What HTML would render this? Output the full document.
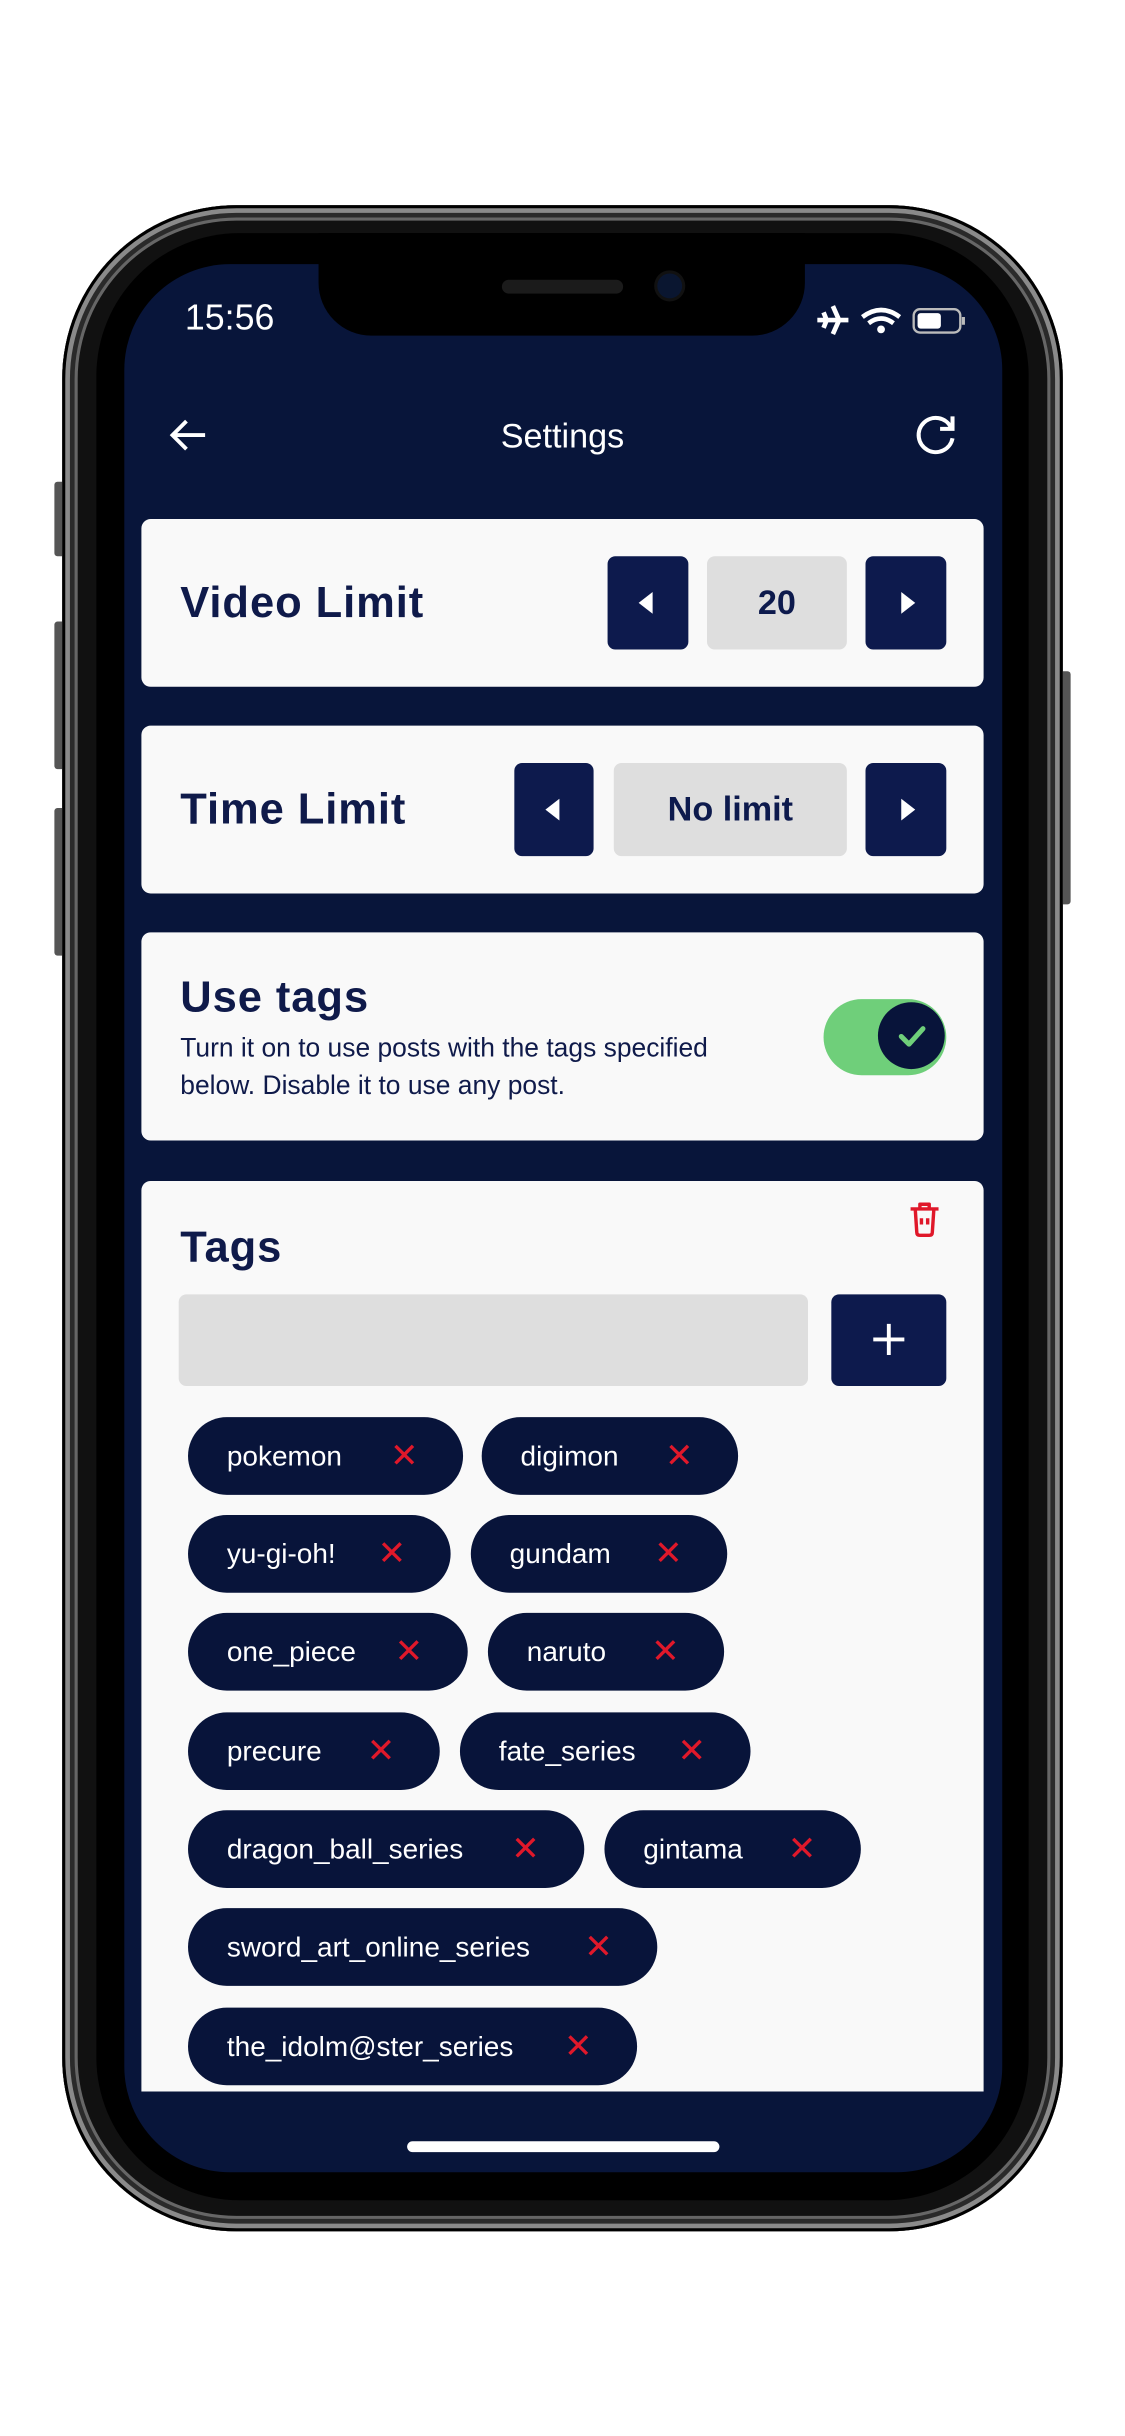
<!DOCTYPE html>
<html><head><meta charset="utf-8"><style>
html,body{margin:0;padding:0;background:#fff;width:1125px;height:2436px;overflow:hidden}
#w{position:absolute;left:0;top:0;width:724px;height:1568px;transform:scale(1.55387);transform-origin:0 0;font-family:"Liberation Sans",sans-serif}
.a{position:absolute}
.card{position:absolute;left:91px;width:542px;background:#f9f9f9;border-radius:6px}
.btn{position:absolute;background:#0d1a4d;border-radius:5px;height:60px;top:24px}
.val{position:absolute;background:#dedede;border-radius:5px;height:60px;top:24px;font-weight:bold;font-size:22px;color:#0d1a4d;text-align:center;line-height:60px}
.ttl{position:absolute;left:25px;font-weight:bold;font-size:28px;color:#0f1a4a;letter-spacing:0.6px}
.chip{position:absolute;left:121px;height:50px;border-radius:25px;background:#08143a;color:#fff;font-size:18px;line-height:50px;padding-left:25px;box-sizing:border-box}
.chip span{position:absolute;color:#e0182a;font-size:22px;top:0}
.tri{position:absolute;top:23px;width:0;height:0;border-top:7px solid transparent;border-bottom:7px solid transparent}
</style></head><body><div id="w">
<div class="a" style="left:35px;top:310px;width:8px;height:48px;background:#555;border-radius:2px"></div>
<div class="a" style="left:35px;top:400px;width:8px;height:95px;background:#555;border-radius:2px"></div>
<div class="a" style="left:35px;top:520px;width:8px;height:95px;background:#555;border-radius:2px"></div>
<div class="a" style="left:681px;top:432px;width:8px;height:150px;background:#555;border-radius:2px"></div>
<div class="a" style="left:40px;top:132px;width:644px;height:1304px;border-radius:112px;background:#111;box-shadow:inset 0 0 0 2px #000,inset 0 0 0 5px #8a8a8a,inset 0 0 0 8px #2a2a2a,inset 0 0 0 10px #666"></div>
<div class="a" style="left:62px;top:150px;width:600px;height:1266px;border-radius:92px;background:#000"></div>
<div class="a" style="left:80px;top:170px;width:565px;height:1228px;border-radius:68px;background:#08153a;overflow:hidden"></div>
<div class="a" style="left:205px;top:150px;width:313px;height:66px;background:#000;border-radius:0 0 34px 34px"></div>
<div class="a" style="left:323px;top:180px;width:78px;height:9px;background:#1b1b1b;border-radius:5px"></div>
<div class="a" style="left:423px;top:176px;width:16px;height:16px;background:#0a1630;border-radius:50%;box-shadow:0 0 0 2px #111"></div>
<div class="a" style="left:119px;top:191px;color:#fff;font-size:23px">15:56</div>
<svg class="a" style="left:524px;top:195px" width="100" height="22" viewBox="0 0 100 22">
<path d="M2 11 L22 11 M12 2 L16 11 L12 20 M8 11 L6 6 M8 11 L6 16" stroke="#fff" stroke-width="3" fill="none"/>
<path d="M31 9 Q43 0 55 9" stroke="#fff" stroke-width="3" fill="none"/><path d="M35 13 Q43 7 51 13" stroke="#fff" stroke-width="3" fill="none"/><circle cx="43" cy="17" r="2.5" fill="#fff"/>
<rect x="64" y="4" width="30" height="15" rx="4" stroke="#bbb" stroke-width="1.5" fill="none"/><rect x="66.5" y="6.5" width="15" height="10" rx="2" fill="#fff"/><rect x="95" y="9" width="2" height="5" fill="#bbb"/>
</svg>
<svg class="a" style="left:108px;top:268px" width="26" height="24"><path d="M24 12H3 M12 3 L3 12 L12 21" stroke="#fff" stroke-width="2.5" fill="none"/></svg>
<div class="a" style="left:262px;width:200px;top:268px;text-align:center;color:#fff;font-size:22px">Settings</div>
<svg class="a" style="left:588px;top:265px" width="30" height="30"><path d="M24 10 A11 11 0 1 0 25 17" stroke="#fff" stroke-width="2.6" fill="none"/><path d="M25 3 V11 H17" stroke="#fff" stroke-width="2.6" fill="none"/></svg>
<div class="card" style="top:334px;height:108px">
<div class="ttl" style="top:38px">Video Limit</div>
<div class="btn" style="left:300px;width:52px"><div class="tri" style="left:20px;border-right:9px solid #fff"></div></div>
<div class="val" style="left:364px;width:90px">20</div>
<div class="btn" style="left:466px;width:52px"><div class="tri" style="left:23px;border-left:9px solid #fff"></div></div>
</div>
<div class="card" style="top:467px;height:108px">
<div class="ttl" style="top:38px">Time Limit</div>
<div class="btn" style="left:240px;width:51px"><div class="tri" style="left:20px;border-right:9px solid #fff"></div></div>
<div class="val" style="left:304px;width:150px">No limit</div>
<div class="btn" style="left:466px;width:52px"><div class="tri" style="left:23px;border-left:9px solid #fff"></div></div>
</div>
<div class="card" style="top:600px;height:134px">
<div class="ttl" style="top:26px">Use tags</div>
<div class="a" style="left:25px;top:63px;font-size:17px;color:#0f1a4a;line-height:24px">Turn it on to use posts with the tags specified<br>below. Disable it to use any post.</div>
<div class="a" style="left:439px;top:43px;width:79px;height:49px;border-radius:25px;background:#6fcf7a"></div>
<div class="a" style="left:474px;top:45px;width:43px;height:43px;border-radius:50%;background:#08143a"></div>
<svg class="a" style="left:485px;top:56px" width="22" height="22"><path d="M4 11 L9 16 L18 6" stroke="#6fcf7a" stroke-width="3.2" fill="none" stroke-linecap="round" stroke-linejoin="round"/></svg>
</div>
<div class="card" style="top:760px;height:586px;border-radius:6px 6px 0 0">
<div class="ttl" style="top:27px">Tags</div>
<svg class="a" style="left:493px;top:13px" width="22" height="24"><path d="M2 5H20 M8 5V2H14V5 M5 5 L6 20 Q6 22 8 22 H14 Q16 22 16 20 L17 5 M9 11V15 M13 11V15" stroke="#e0182a" stroke-width="2.2" fill="none" stroke-linejoin="round"/></svg>
<div class="a" style="left:24px;top:73px;width:405px;height:59px;background:#dedede;border-radius:5px"></div>
<div class="a" style="left:444px;top:73px;width:74px;height:59px;background:#0d1a4d;border-radius:5px"></div>
<svg class="a" style="left:470px;top:91px" width="22" height="22"><path d="M11 1V21 M1 11H21" stroke="#fff" stroke-width="2.5"/></svg>
</div>
<div class="chip" style="top:912px;width:177px">pokemon<span style="left:130px">✕</span></div>
<div class="chip" style="top:912px;left:310px;width:165px">digimon<span style="left:118px">✕</span></div>
<div class="chip" style="top:975px;width:169px">yu-gi-oh!<span style="left:122px">✕</span></div>
<div class="chip" style="top:975px;left:303px;width:165px">gundam<span style="left:118px">✕</span></div>
<div class="chip" style="top:1038px;width:180px">one_piece<span style="left:133px">✕</span></div>
<div class="chip" style="top:1038px;left:314px;width:152px">naruto<span style="left:105px">✕</span></div>
<div class="chip" style="top:1102px;width:162px">precure<span style="left:115px">✕</span></div>
<div class="chip" style="top:1102px;left:296px;width:187px">fate_series<span style="left:140px">✕</span></div>
<div class="chip" style="top:1165px;width:255px">dragon_ball_series<span style="left:208px">✕</span></div>
<div class="chip" style="top:1165px;left:389px;width:165px">gintama<span style="left:118px">✕</span></div>
<div class="chip" style="top:1228px;width:302px">sword_art_online_series<span style="left:255px">✕</span></div>
<div class="chip" style="top:1292px;width:289px">the_idolm@ster_series<span style="left:242px">✕</span></div>
<div class="a" style="left:262px;top:1378px;width:201px;height:7px;border-radius:4px;background:#fff"></div>
</div></body></html>
